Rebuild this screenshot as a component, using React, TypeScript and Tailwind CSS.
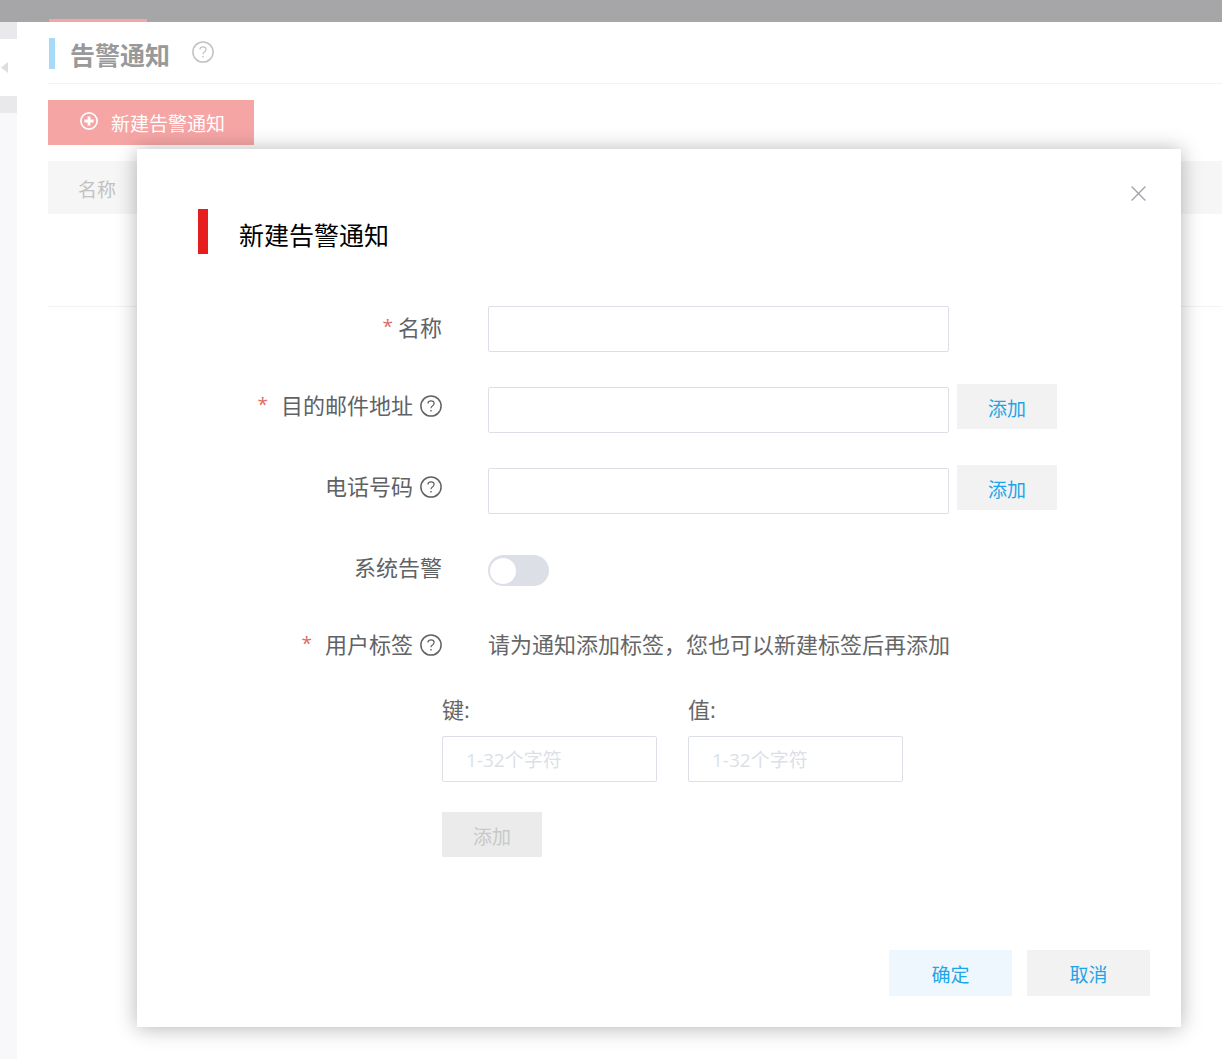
import { useState } from "react";

const FIELD = "h-[46px] min-w-0 rounded-[2px] border border-[#dcdfe6] bg-white px-[23px] pt-[2px] text-[19px] text-[#606266] outline-none placeholder:text-[#dcdfe6]";
const PLAIN_BUTTON = "h-[45px] w-[100px] shrink-0 bg-[#f2f2f2] pt-1 text-[19px] text-[#1ea5e8]";

function HelpIcon() {
  return (
    <svg viewBox="0 0 22 22" className="h-[22px] w-[22px] shrink-0" fill="none" stroke="currentColor" aria-hidden="true">
      <circle cx="11" cy="11" r="10.1" strokeWidth="1.5" />
      <path d="M7.9 8.5C7.9 6.8 9.2 5.8 11 5.8s3.1 1 3.1 2.6c0 1.2-.8 1.9-1.7 2.5-.9.6-1.4 1.2-1.4 2.3" strokeWidth="1.2" />
      <path d="M11 15v1.5" strokeWidth="1.4" />
    </svg>
  );
}

function PlusIcon() {
  return (
    <svg viewBox="0 0 18 18" className="h-[18px] w-[18px]" fill="none" stroke="currentColor" aria-hidden="true">
      <circle cx="9" cy="9" r="8.1" strokeWidth="1.7" />
      <path d="M9 4.4v9.2M4.4 9h9.2" strokeWidth="2.8" />
    </svg>
  );
}

function FieldLabel({ id, text, required, help }: { id: string; text: string; required?: boolean; help?: boolean }) {
  return (
    <label htmlFor={id} className="flex h-[43px] w-[305px] shrink-0 items-center justify-end">
      {required && <span className={`self-start text-[19px] leading-[41px] text-[#dd6b66] ${help ? "mr-[13px]" : "mr-[5px]"}`}>*</span>}
      <span>{text}</span>
      {help && <span className="ml-[7px]"><HelpIcon /></span>}
    </label>
  );
}

function Sidebar() {
  return (
    <aside className="flex w-[17px] shrink-0 flex-col bg-[#f8f8fb]">
      <div className="h-[17px] bg-[#e9e9eb]" />
      <button aria-label="收起" className="flex h-[57px] items-center bg-white pl-px text-[#dcdee2]">
        <svg viewBox="0 0 7 11" className="h-[11px] w-[7px]" fill="currentColor">
          <path d="M7 0v11L0 5.5z" />
        </svg>
      </button>
      <div className="h-[17px] bg-[#e9e9eb]" />
    </aside>
  );
}

function AlarmPage() {
  return (
    <main className="min-w-0 flex-1 pl-[31px]">
      <div className="flex h-[62px] items-start border-b border-[#f3f3f4] pt-4">
        <span className="ml-px h-[31px] w-[6px] bg-[#a5dbf6]" />
        <h1 className="ml-[15px] text-[25px] font-bold leading-[34px] text-[#999]">告警通知</h1>
        <span className="mt-[3px] ml-[22px] text-[#c2c2c3]"><HelpIcon /></span>
      </div>
      <button className="mt-4 flex h-[45px] w-[206px] items-start bg-[#f6a5a5] pt-3 pl-8 text-[19px] leading-[25px] text-white">
        <PlusIcon />
        <span className="ml-[13px]">新建告警通知</span>
      </button>
      <table className="mt-4 w-full border-collapse">
        <thead>
          <tr className="h-[53px] bg-[#f6f6f6]">
            <th className="pt-[5px] pl-[30px] text-left text-[19px] font-normal text-[#c2c2c3]">名称</th>
          </tr>
        </thead>
        <tbody>
          <tr className="h-[92px] border-b border-[#f3f3f4]">
            <td />
          </tr>
        </tbody>
      </table>
    </main>
  );
}

function CreateDialog() {
  const [system, setSystem] = useState(false);

  return (
    <div role="dialog" aria-labelledby="dialog-title"
      className="relative bg-white pt-[60px] pb-[31px] text-[22px] leading-[43px] text-[#606266] shadow-[0_1px_20px_rgba(0,0,0,0.3)]">
      <button aria-label="关闭" className="absolute top-[37px] right-[35px] text-[#a3a6ae]">
        <svg viewBox="0 0 15 15" className="block h-[15px] w-[15px]" fill="none" stroke="currentColor" strokeWidth="1.4">
          <path d="M.6.6l13.8 13.8M14.4.6L.6 14.4" />
        </svg>
      </button>

      <div className="ml-[61px] flex h-[45px] items-start">
        <span className="h-[45px] w-[10px] bg-[#e61e1e]" />
        <h2 id="dialog-title" className="ml-[31px] text-[25px] leading-[52px] text-black">新建告警通知</h2>
      </div>

      <form className="mt-[52px]" onSubmit={(e) => e.preventDefault()}>
        <div className="flex h-[78px] items-start gap-[46px]">
          <FieldLabel id="name" text="名称" required />
          <input id="name" className={`${FIELD} w-[461px]`} />
        </div>
        <div className="flex h-[81px] items-start gap-[46px]">
          <FieldLabel id="mail" text="目的邮件地址" required help />
          <div className="flex items-start gap-2">
            <input id="mail" className={`${FIELD} mt-[3px] w-[461px]`} />
            <button type="button" className={PLAIN_BUTTON}>添加</button>
          </div>
        </div>
        <div className="flex h-[81px] items-start gap-[46px]">
          <FieldLabel id="phone" text="电话号码" help />
          <div className="flex items-start gap-2">
            <input id="phone" className={`${FIELD} mt-[3px] w-[461px]`} />
            <button type="button" className={PLAIN_BUTTON}>添加</button>
          </div>
        </div>
        <div className="flex h-[77px] items-start gap-[46px]">
          <FieldLabel id="system" text="系统告警" />
          <input id="system" type="checkbox" role="switch" checked={system} onChange={(e) => setSystem(e.target.checked)}
            className="mt-[9px] flex h-[31px] w-[61px] appearance-none items-center rounded-full bg-[#dcdfe6] px-[2px] before:h-[26px] before:w-[26px] before:rounded-full before:bg-white before:content-[''] checked:justify-end checked:bg-[#1ea5e8]" />
        </div>
        <div className="flex items-start gap-[46px]">
          <FieldLabel id="tag-key" text="用户标签" required help />
          <p className="whitespace-nowrap text-[#666]">请为通知添加标签，您也可以新建标签后再添加</p>
        </div>

        <div className="mt-[22px] ml-[305px] flex gap-[31px]">
          {[{ id: "tag-key", label: "键:" }, { id: "tag-value", label: "值:" }].map((f) => (
            <div key={f.id} className="flex w-[215px] flex-col gap-[5px]">
              <label htmlFor={f.id} className="text-[#666]">{f.label}</label>
              <input id={f.id} placeholder="1-32个字符" className={FIELD} />
            </div>
          ))}
        </div>
        <button type="button" disabled className="mt-[30px] ml-[305px] block h-[45px] w-[100px] bg-[#ebebeb] pt-1 text-[19px] text-[#c8c8c8]">添加</button>

        <div className="mt-[93px] mr-[31px] flex justify-end gap-[15px] text-[19px] text-[#1ea5e8]">
          <button type="submit" className="h-[46px] w-[123px] bg-[#eef7fe] pt-1">确定</button>
          <button type="button" className="h-[46px] w-[123px] bg-[#f2f2f2] pt-1">取消</button>
        </div>
      </form>
    </div>
  );
}

export default function App() {
  return (
    <div lang="zh-CN" className="relative flex min-h-screen flex-col bg-white font-['Open_Sans','Noto_Sans_CJK_SC',sans-serif]">
      <header className="flex h-[22px] items-end bg-[#a6a6a8] pl-[49px]">
        <span className="h-[3px] w-[98px] bg-[#f6a5a5]" />
      </header>
      <div className="flex flex-1">
        <Sidebar />
        <AlarmPage />
      </div>
      <div className="absolute inset-0 pt-[149px] pr-[41px] pl-[137px]">
        <CreateDialog />
      </div>
    </div>
  );
}
